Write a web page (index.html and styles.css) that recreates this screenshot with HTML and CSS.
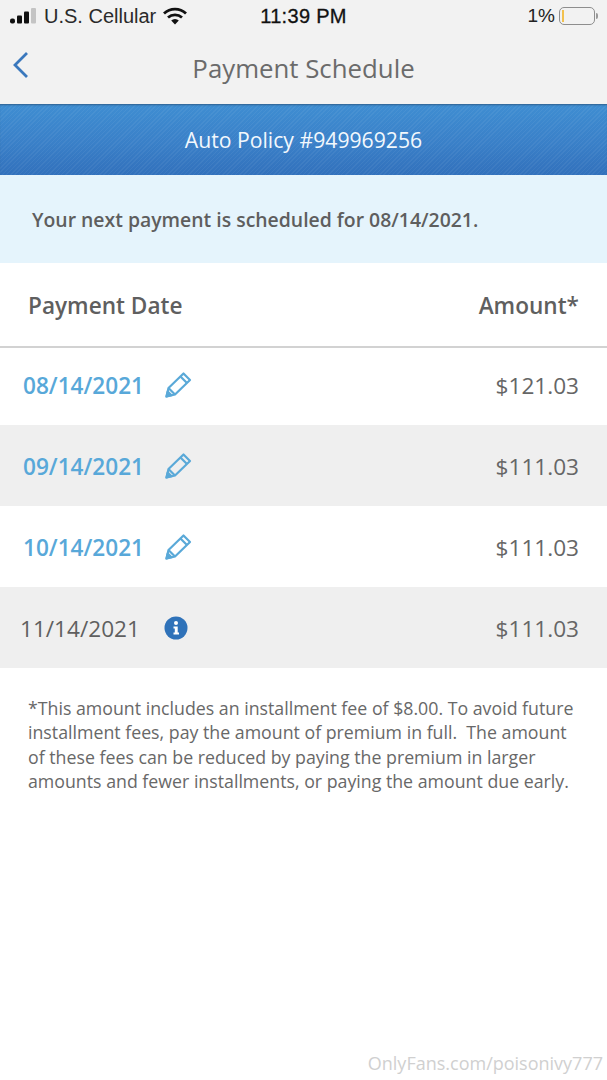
FILE: index.html
```html
<!DOCTYPE html>
<html lang="en">
<head>
<meta charset="utf-8">
<title>Payment Schedule</title>
<link rel="stylesheet" href="styles.css">
</head>
<body>
<div class="page">
  <header class="top">
    <div class="status">
      <div class="status-left">
        <svg class="signal" width="27" height="18" viewBox="0 0 27 18"><rect x="0" y="11.500" width="5" height="5" rx="2" fill="#111"/><rect x="7" y="8.500" width="5" height="8" rx="1" fill="#111"/><rect x="14" y="4.500" width="5" height="12" rx="1" fill="#111"/><rect x="21" y="1" width="5" height="15.500" rx="1" fill="#c4c4c4"/></svg>
        <span class="carrier">U.S. Cellular</span>
        <svg class="wifi" width="24" height="18" viewBox="0 0 24 18"><path d="M1 6.500a16 16 0 0 1 22 0" fill="none" stroke="#111" stroke-width="2.800"/><path d="M5 10.500a10.500 10.500 0 0 1 14 0" fill="none" stroke="#111" stroke-width="2.800"/><path d="M8.200 13.400a5.500 5.500 0 0 1 7.600 0L12 17.400z" fill="#111"/></svg>
      </div>
      <div class="time">11:39 PM</div>
      <div class="status-right">
        <span class="pct">1%</span>
        <span class="battery"><span class="charge"></span></span>
        <span class="nub"></span>
      </div>
    </div>
    <div class="nav">
      <svg class="back" width="18" height="28" viewBox="0 0 18 28"><path d="M15 2 3 14l12 12" fill="none" stroke="#3a78bd" stroke-width="2.800"/></svg>
      <h1 class="title">Payment Schedule</h1>
    </div>
  </header>
  <div class="banner">Auto Policy #949969256</div>
  <div class="notice">Your next payment is scheduled for 08/14/2021.</div>
  <div class="thead"><span>Payment Date</span><span>Amount*</span></div>
  <div class="row first">
    <div class="date-cell"><span class="date link">08/14/2021</span>
      <svg class="pencil" width="28" height="28" viewBox="0 0 28 28"><use href="#pen"/></svg></div>
    <span class="amount">$121.03</span>
  </div>
  <div class="row alt">
    <div class="date-cell"><span class="date link">09/14/2021</span>
      <svg class="pencil" width="28" height="28" viewBox="0 0 28 28"><use href="#pen"/></svg></div>
    <span class="amount">$111.03</span>
  </div>
  <div class="row">
    <div class="date-cell"><span class="date link">10/14/2021</span>
      <svg class="pencil" width="28" height="28" viewBox="0 0 28 28"><use href="#pen"/></svg></div>
    <span class="amount">$111.03</span>
  </div>
  <div class="row alt">
    <div class="date-cell plain"><span class="date">11/14/2021</span>
      <svg class="info" width="24" height="24" viewBox="0 0 24 24"><circle cx="12" cy="12" r="11.500" fill="#2f72b9"/><circle cx="12" cy="7" r="2" fill="#fff"/><path d="M9.500 10.500H13.700V16.500H15V18.500H9.500V16.500H10.800V12.500H9.500z" fill="#fff"/></svg></div>
    <span class="amount">$111.03</span>
  </div>
  <p class="foot">*This amount includes an installment fee of $8.00. To avoid future installment fees, pay the amount of premium in full.&nbsp; The amount of these fees can be reduced by paying the premium in larger amounts and fewer installments, or paying the amount due early.</p>
  <div class="mark">OnlyFans.com/poisonivy777</div>
  <svg class="defs" width="0" height="0"><defs><g id="pen" fill="none" stroke="#5aa9d8" stroke-width="2.200" stroke-linejoin="round"><path d="M2.500 25.500 4.500 17 19.500 2.500 26 9 11 23.500z"/><path d="M16.500 5.500 23 12"/><path d="M4.500 17 11 23.500"/><path d="M2.500 25.500 3.700 20.500 7.500 24.300z" fill="#5aa9d8"/></g></defs></svg>
</div>
</body>
</html>
```
FILE: styles.css
```css
* { box-sizing: border-box; }
html, body { margin: 0; padding: 0; background: #fff; }
body { font-family: "Open Sans", sans-serif; color: #5f5f5f; }
.page { position: relative; width: 607px; height: 1080px; overflow: hidden; }
.top { height: 104px; background: #f2f2f2; }
.status { height: 34px; display: grid; grid-template-columns: 1fr auto 1fr; align-items: center; padding: 0 9px 2px 10px; font-family: "Liberation Sans", sans-serif; color: #111; font-size: 20px; }
.status-left { display: flex; align-items: center; }
.signal { margin-right: 7px; }
.carrier { color: #2a2a2a; margin-right: 7px; }
.time { font-size: 20px; letter-spacing: 0.300px; -webkit-text-stroke: 0.300px #111; margin-left: -1px; }
.status-right { display: flex; align-items: center; justify-content: flex-end; }
.pct { margin-right: 4px; color: #222; font-size: 19px; }
.battery { width: 36px; height: 18px; border: 1.500px solid #8e8e8e; border-radius: 5px; padding: 2px; display: flex; }
.charge { width: 2px; background: #f2c14e; }
.nub { width: 2px; height: 6px; margin-left: 1px; background: #999; border-radius: 0 2px 2px 0; }
.nav { position: relative; height: 70px; display: flex; align-items: center; justify-content: center; padding-bottom: 2px; }
.back { position: absolute; left: 12px; top: 17px; }
.title { margin: 0; font-size: 25.800px; font-weight: 400; color: #6b6b6b; }
.banner { height: 71px; display: flex; align-items: center; justify-content: center; color: #f2f8fd; font-size: 21.200px;
  box-shadow: inset 0 2px 2px -1px #2f5f8e;
  background: repeating-linear-gradient(135deg, rgba(255,255,255,0.050) 0 1px, rgba(255,255,255,0) 1px 3px), linear-gradient(180deg, #3f8ed2 0%, #3a80c8 55%, #3271bc 100%); }
.notice { height: 88px; background: #e5f4fc; display: flex; align-items: center; padding-left: 32px; font-size: 19.400px; font-weight: 600; color: #5e5e5e; }
.thead { height: 85px; display: flex; align-items: center; justify-content: space-between; padding: 2px 28px 0; border-bottom: 2px solid #d2d2d2; font-size: 22.600px; font-weight: 600; color: #5f5f5f; }
.row { height: 81px; display: flex; align-items: center; justify-content: space-between; padding: 2px 28px 0 23px; background: #fff; }
.first { height: 77px; padding-bottom: 4px; }
.alt { background: #efefef; }
.date-cell { display: flex; align-items: center; }
.date { font-size: 22.600px; }
.link { color: #58a8d9; font-weight: 600; }
.pencil { margin-left: 20px; margin-top: -2px; }
.plain { margin-left: -3px; }
.info { margin-left: 24px; margin-top: -2px; }
.amount { font-size: 22.600px; color: #666; }
.foot { margin: 28px 0 0; padding: 0 27px 0 28px; font-size: 17.750px; line-height: 24.400px; color: #686868; }
.mark { position: absolute; right: 4px; bottom: 5px; font-size: 18px; color: #d0d0d0; }
.defs { position: absolute; }
```
